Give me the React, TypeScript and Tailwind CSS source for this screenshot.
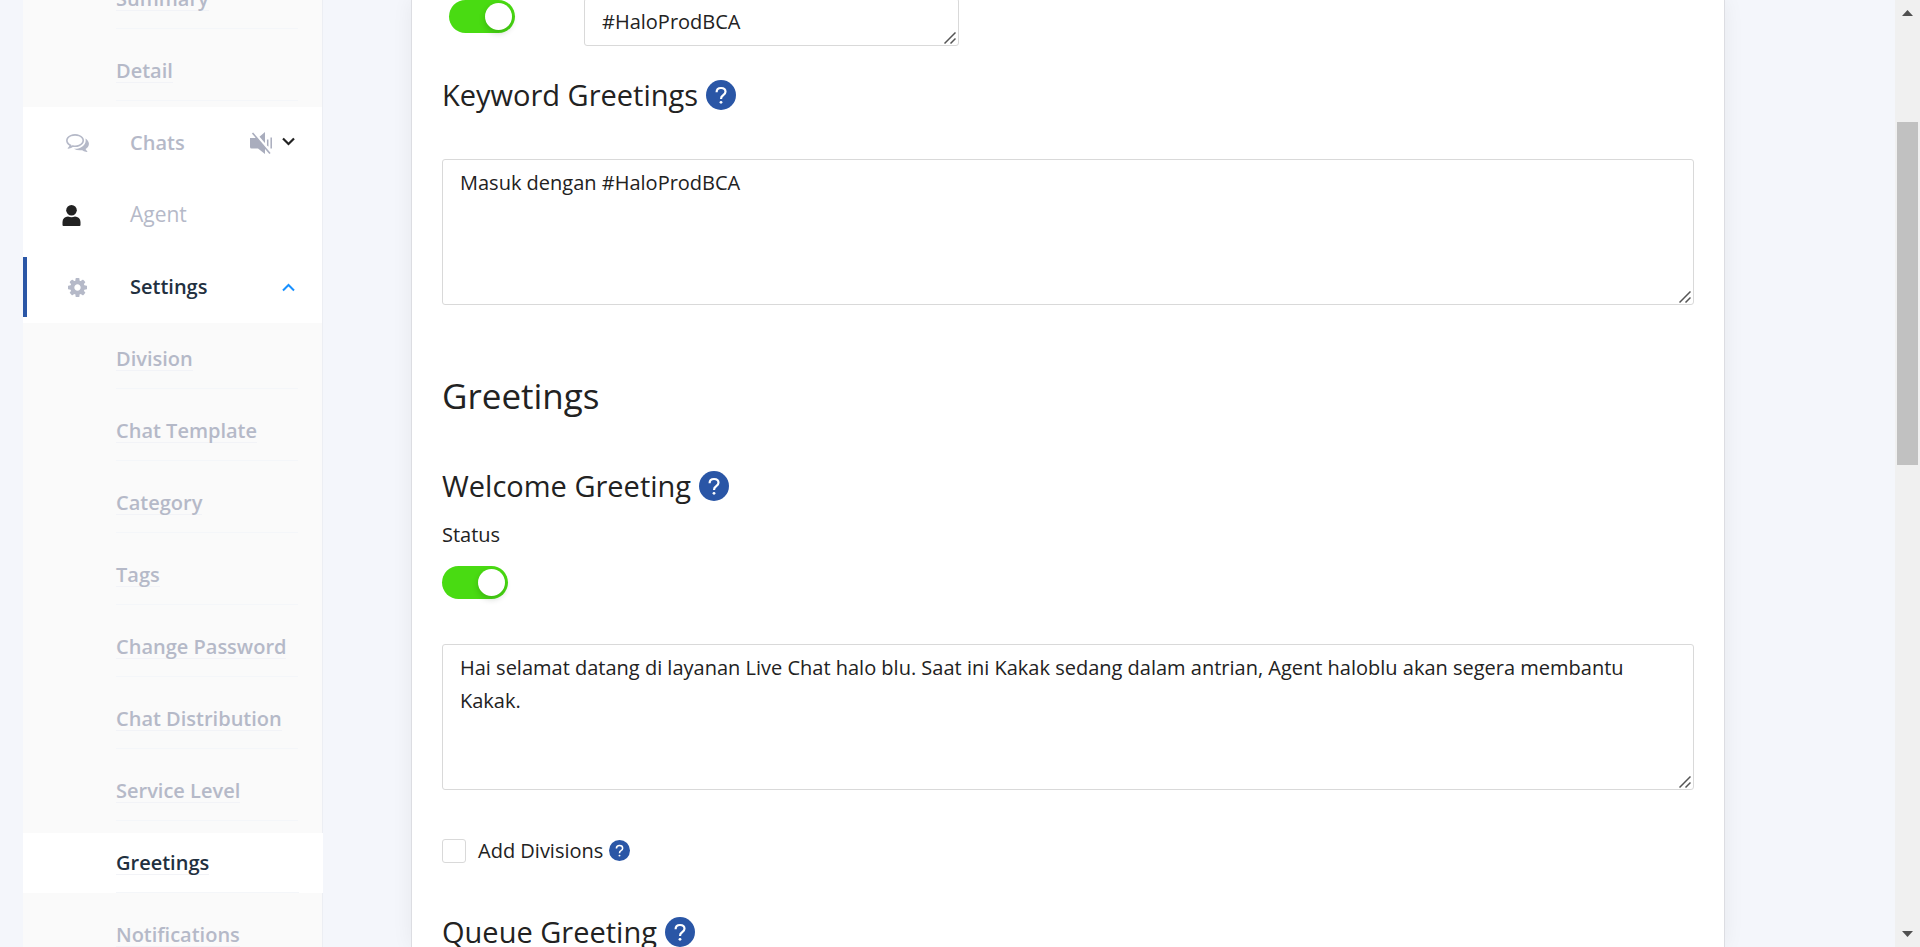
import React from "react";

const SUB_TOP = ["Summary", "Detail"];
const SUB_SETTINGS = ["Division", "Chat Template", "Category", "Tags", "Change Password", "Chat Distribution", "Service Level", "Greetings", "Notifications"];

function Help({ small = false }: { small?: boolean }) {
  return (
    <button type="button" aria-label="Help" className={small ? "h-[21px] w-[21px] shrink-0" : "h-[30px] w-[30px] shrink-0"}>
      <svg viewBox="0 0 30 30" className="block h-full w-full">
        <circle cx="15" cy="15" r="15" fill="#2a56a6" />
        <path d="M10.600 12.200C10.600 9.400 12.400 8 15 8s4.500 1.500 4.500 3.800c0 1.700-1 2.600-2.400 3.500-1.500.9-2.100 1.600-2.100 3.700" fill="none" stroke="#fff" strokeWidth="2.200" />
        <circle cx="15" cy="22.300" r="1.400" fill="#fff" />
      </svg>
    </button>
  );
}

function Toggle({ label }: { label: string }) {
  return (
    <label className="relative block h-[33px] w-[66px] rounded-full bg-[#49db12]">
      <input type="checkbox" role="switch" aria-label={label} defaultChecked className="absolute inset-0 appearance-none" />
      <span className="absolute top-[3px] right-[3px] h-[27px] w-[27px] rounded-full bg-white shadow-[0_3px_6px_rgba(0,35,11,0.2)]" />
    </label>
  );
}

function Area({ label, value, className }: { label: string; value: string; className: string }) {
  return (
    <div className={"relative " + className}>
      <textarea
        aria-label={label}
        defaultValue={value}
        className="block h-full w-full resize-none overflow-hidden rounded-[3px] border border-[#d9d9d9] bg-white px-[17px] py-[6px] text-[20px] leading-[33px]"
      />
      <svg viewBox="0 0 12 12" className="pointer-events-none absolute right-[3px] bottom-[2px] h-[12px] w-[12px]">
        <path d="M.5 11.500l11-11M6.500 11.500l5-5" stroke="#555" strokeWidth="1.500" />
      </svg>
    </div>
  );
}

function Submenu({ items }: { items: string[] }) {
  return (
    <ul className="bg-[#fafafa]">
      {items.map((item) => {
        const active = item === "Greetings";
        return (
          <li key={item} className={active ? "-mr-px py-[6px]" : "py-[6px]"}>
            <a href="#" className={active ? "block bg-white pl-[93px] pr-[24px] text-[#22303f]" : "block pl-[93px] pr-[24px] text-[#b5b9c8]"}>
              <span className="flex h-[60px] items-center border-b border-[#f4f6f9]">
                <span className="mt-px border-b border-[#f2f3f7] leading-[22px]">{item}</span>
              </span>
            </a>
          </li>
        );
      })}
    </ul>
  );
}

function Sidebar() {
  return (
    <nav className="ml-[23px] w-[300px] shrink-0 border-r border-[#eceef3] bg-white text-[20px] font-semibold text-[#b5b9c8]">
      <div className="-mt-[37px]">
        <Submenu items={SUB_TOP} />
        <a href="#" className="flex h-[72px] items-center pr-[27px]">
          <span className="flex w-[107px] pl-[43px]">
            <svg viewBox="0 256 1792 1408" className="h-[18px] w-[23px]" fill="#b5b9c8">
              <path d="M704 384q-153 0-286 52t-211.5 141-78.5 191q0 82 53 158t149 132l97 56-35 84q34-20 62-39l44-31 53 10q78 14 153 14 153 0 286-52t211.5-141 78.5-191-78.5-191-211.5-141-286-52zm0-128q191 0 353.5 68.5t256.5 186.5 94 257-94 257-256.5 186.5-353.5 68.5q-86 0-176-16-124 88-278 128-36 9-86 16h-3q-11 0-20.5-8t-11.5-21q-1-3-1-6.5t.5-6.5 2-6l2.500-5 3.500-5.500 4-5 4.500-5 4-4.500q5-6 23-25t26-29.500 22.500-29 25-38.500 20.500-44q-124-72-195-177t-71-224q0-139 94-257t256.500-186.500 353.500-68.500zm822 1169q10 24 20.500 44t25 38.500 22.500 29 26 29.500 23 25q1 1 4 4.500t4.500 5 4 5 3.500 5.500l2.500 5 2 6 .5 6.500-1 6.500q-3 14-13 22t-22 7q-50-7-86-16-154-40-278-128-90 16-176 16-271 0-472-132 58 4 88 4 161 0 309-45t264-129q125-92 192-212t67-254q0-77-23-152 129 71 204 178t75 230q0 120-71 224.500t-195 176.500z" />
            </svg>
          </span>
          <span className="grow">Chats</span>
          <svg viewBox="0 0 22 22" className="h-[22px] w-[22px]">
            <path d="M0 6h8l7-6v22l-7-5.500H1.500A1.500 1.500 0 0 1 0 15z" fill="#a9adbd" />
            <path d="M17.700 7.500v7M21.200 5.500v11" stroke="#a9adbd" strokeWidth="1.500" />
            <path d="M3.500 0l18 21" stroke="#fff" strokeWidth="3" />
            <path d="M2.500 1l17.500 20.500" stroke="#a9adbd" strokeWidth="1.600" />
          </svg>
          <svg viewBox="0 0 13 9" className="mb-[3px] ml-[10px] h-[9px] w-[13px]"><path d="M1 1.500l5.500 5.500L12 1.500" fill="none" stroke="#222" strokeWidth="2.200" /></svg>
        </a>
        <a href="#" className="flex h-[72px] items-center text-[21px] font-normal">
          <span className="flex w-[107px] pl-[39px]">
            <svg viewBox="0 0 19 21" className="h-[21px] w-[19px]" fill="#222"><circle cx="9.500" cy="5.300" r="5.300" /><path d="M.5 20v-3a5.500 5.500 0 0 1 5.500-5.500q3.500 1.500 7 0a5.500 5.500 0 0 1 5.500 5.500v3q0 1-1 1h-16q-1 0-1-1z" /></svg>
          </span>
          <span>Agent</span>
        </a>
        <div className="py-[6px]">
          <a href="#" className="flex h-[60px] items-center border-l-4 border-[#2a56a6] pr-[27px] text-[#22303f]">
            <span className="flex w-[103px] pl-[41px]">
              <svg viewBox="128 128 1536 1536" className="h-[19px] w-[19px]" fill="#b5b9c8">
                <path d="M1152 896q0-106-75-181t-181-75-181 75-75 181 75 181 181 75 181-75 75-181zm512-109v222q0 12-8 23t-20 13l-185 28q-19 54-39 91 35 50 107 138 10 12 10 25t-9 23q-27 37-99 108t-94 71q-12 0-26-9l-138-108q-44 23-91 38-16 136-29 186-7 28-36 28h-222q-14 0-24.500-8.500t-11.500-21.500l-28-184q-49-16-90-37l-141 107q-10 9-25 9-14 0-25-11-126-114-165-168-7-10-7-23 0-12 8-23 15-21 51-66.500t54-70.500q-27-50-41-99l-183-27q-13-2-21-12.500t-8-23.500v-222q0-12 8-23t19-13l186-28q14-46 39-92-40-57-107-138-10-12-10-24 0-10 9-23 26-36 98.500-107.500t94.500-71.500q13 0 26 10l138 107q44-23 91-38 16-136 29-186 7-28 36-28h222q14 0 24.500 8.500t11.500 21.500l28 184q49 16 90 37l142-107q9-9 24-9 13 0 25 10 129 119 165 170 7 8 7 22 0 12-8 23-15 21-51 66.500t-54 70.500q26 50 41 98l183 28q13 2 21 12.500t8 23.500z" />
              </svg>
            </span>
            <span className="grow">Settings</span>
            <svg viewBox="0 0 13 9" className="h-[9px] w-[13px]"><path d="M1 7.500l5.500-5.500L12 7.500" fill="none" stroke="#1890ff" strokeWidth="2" /></svg>
          </a>
        </div>
        <Submenu items={SUB_SETTINGS} />
      </div>
    </nav>
  );
}

const SUBHEAD = "flex h-[40px] items-center gap-[8px] text-[29px]";

export default function App() {
  return (
    <div className="flex h-screen overflow-hidden bg-[#f4f6fb] font-['Open_Sans',sans-serif] text-[#222]">
      <Sidebar />
      <main className="ml-[88px] mr-[170px] min-w-0 grow border-x border-[#dcdde2] bg-white px-[30px] shadow-[0_0_20px_rgba(0,0,0,0.06)]">
        <section className="flex items-start">
          <div className="ml-[7px] w-[135px]"><Toggle label="Keyword status" /></div>
          <Area label="Keyword" value="#HaloProdBCA" className="-mt-[2px] h-[48px] w-[375px]" />
        </section>

        <section className="mt-[29px]">
          <h3 className={SUBHEAD}>Keyword Greetings <Help /></h3>
          <Area label="Keyword Greetings" value="Masuk dengan #HaloProdBCA" className="mt-[44px] h-[146px]" />
        </section>

        <h2 className="mt-[66px] h-[50px] text-[35px] leading-[50px]">Greetings</h2>

        <section className="mt-[45px]">
          <h3 className={SUBHEAD}>Welcome Greeting <Help /></h3>
          <p className="mt-[13px] text-[20px] leading-[32px]">Status</p>
          <div className="mt-[15px]"><Toggle label="Status" /></div>
          <Area
            label="Welcome Greeting"
            value="Hai selamat datang di layanan Live Chat halo blu. Saat ini Kakak sedang dalam antrian, Agent haloblu akan segera membantu Kakak."
            className="mt-[45px] h-[146px]"
          />
          <div className="mt-[44px] flex h-[33px] items-center text-[20px]">
            <label className="flex items-center gap-[12px]">
              <input type="checkbox" className="h-[24px] w-[24px] appearance-none rounded-[3px] border border-[#d9d9d9] bg-white" />
              Add Divisions
            </label>
            <span className="ml-[6px] flex"><Help small /></span>
          </div>
        </section>

        <section className="mt-[45px]">
          <h3 className={SUBHEAD}>Queue Greeting <Help /></h3>
        </section>
      </main>
      <div className="flex w-[25px] shrink-0 flex-col items-center bg-[#f0f0f0]" aria-hidden="true">
        <svg viewBox="0 0 11 6" className="mt-[10px] h-[6px] w-[11px]"><path d="M0 6l5.500-6L11 6z" fill="#505050" /></svg>
        <div className="mt-[106px] h-[343px] w-[21px] bg-[#c1c1c1]" />
        <svg viewBox="0 0 11 6" className="mt-auto mb-[10px] h-[6px] w-[11px]"><path d="M0 0l5.500 6L11 0z" fill="#505050" /></svg>
      </div>
    </div>
  );
}
